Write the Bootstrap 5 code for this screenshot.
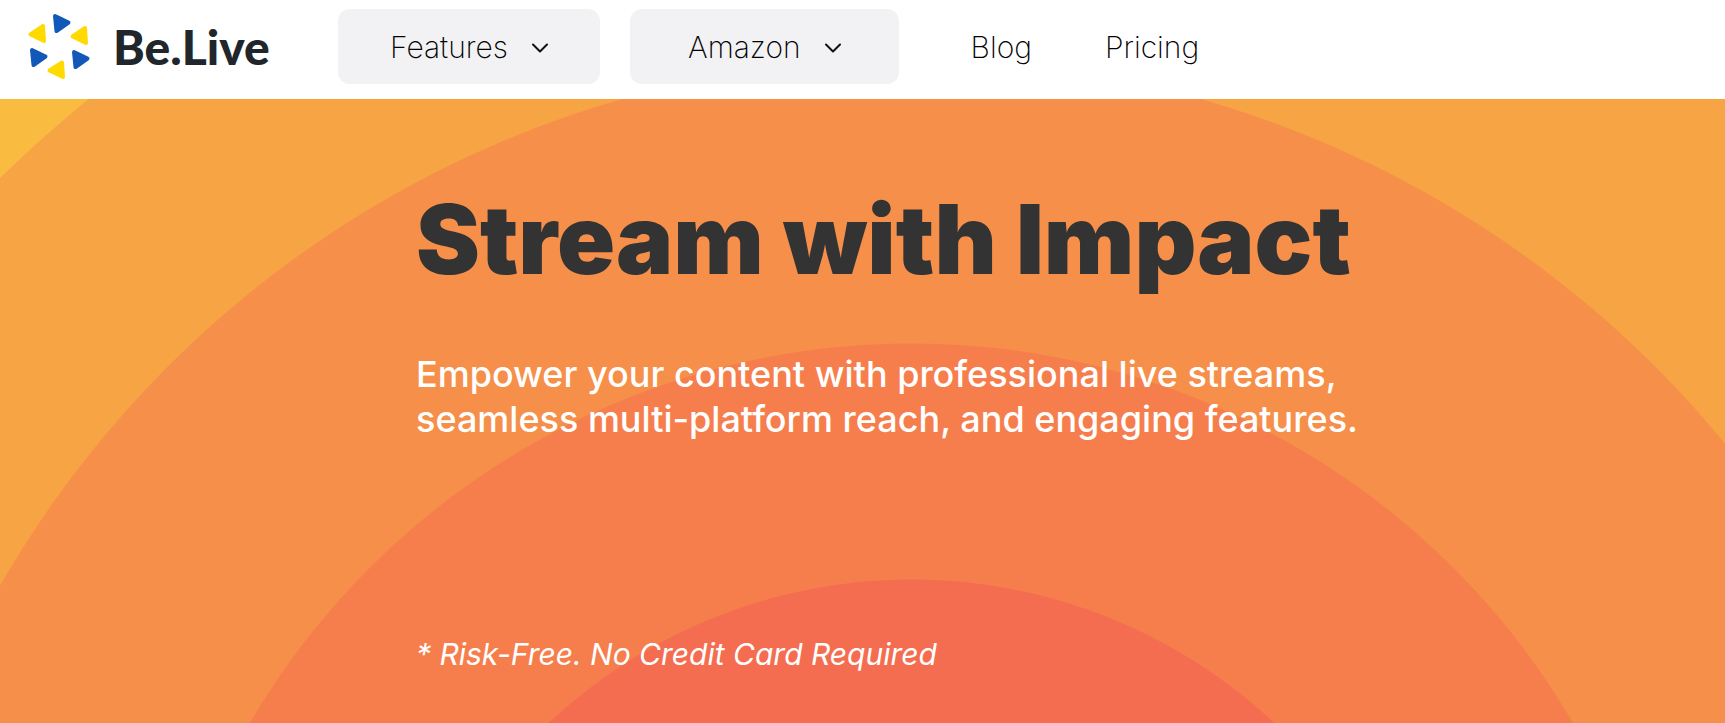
<!DOCTYPE html>
<html lang="en">
<head>
<meta charset="utf-8">
<meta name="viewport" content="width=device-width, initial-scale=1">
<title>Be.Live</title>
<link rel="stylesheet" href="https://cdn.jsdelivr.net/npm/bootstrap@5.3.0/dist/css/bootstrap.min.css">
<style>
  body { font-family: Inter, "Liberation Sans", sans-serif; }
  .site-bar { padding: 9px 28px 15px; }
  .brand-link { gap: 22px; width: 310px; color: #20262b; font: 900 48px/56px Lato, sans-serif; }
  .site-links { gap: 30px; font-size: 30px; font-weight: 200; line-height: 37px; }
  .site-links a { color: #000; }
  .menu-pill { --bs-btn-font-size: 30px; --bs-btn-font-weight: 200; --bs-btn-line-height: 37px;
    --bs-btn-padding-x: 52px; --bs-btn-border-width: 0; --bs-btn-border-radius: 12px;
    --bs-btn-bg: #f2f2f4; --bs-btn-hover-bg: #e8e8eb; --bs-btn-color: #000;
    padding-top: 20px; padding-bottom: 18px; gap: 24px; }
  .menu-pill-wide { --bs-btn-padding-x: 58px; }
  .plain-links { gap: 73px; padding: 2px 0 0 42px; }
  .hero-area { color: #fff; padding: 82px 24px 32px calc(24% + 2px);
    background: radial-gradient(circle at calc(50% + 49px) 1011px,
      #f46d50 530px, #f67e4d 531px, #f67e4d 766px, #f68f49 767px,
      #f68f49 1051px, #f7a445 1052px, #f7a445 1303px, #f9bb40 1304px); }
  .hero-title { color: #333; font-size: 96px; font-weight: 900; line-height: 116px; margin-bottom: 55px; }
  .hero-text { font-size: 36px; font-weight: 500; line-height: 45px; max-width: 960px; margin-bottom: 194px; }
  .hero-note { font-size: 30px; line-height: 36px; }
</style>
</head>
<body class="d-flex flex-column min-vh-100">
<header>
  <nav class="site-bar d-flex flex-wrap align-items-center bg-white">
    <a class="brand-link d-flex align-items-center text-decoration-none" href="#">
      <svg width="63" height="67" viewBox="28 13 63 67" stroke-width="4" stroke-linejoin="round" aria-hidden="true">
        <g fill="#1258b8" stroke="#1258b8">
          <path d="M55 16L68.500 22.500L56.500 31Z"/><path d="M32 50L45.500 56.500L33.500 65Z"/><path d="M74 52L87.500 58.500L75.500 67Z"/>
        </g>
        <g fill="#ffda00" stroke="#ffda00">
          <path d="M43 26L30.500 34.500L44 41Z"/><path d="M85 28L72.500 36.500L86 43Z"/><path d="M62 62.500L49.500 70.500L63 77Z"/>
        </g>
      </svg>
      <span>Be.Live</span>
    </a>
    <div class="site-links d-flex flex-wrap align-items-center">
      <button class="btn menu-pill d-flex align-items-center" type="button">Features
        <svg width="16" height="10" viewBox="0 0 16 10" fill="none" stroke="#111" stroke-width="2" stroke-linecap="round" stroke-linejoin="round" aria-hidden="true"><path d="M1 1.500L8 8.500L15 1.500"/></svg>
      </button>
      <button class="btn menu-pill menu-pill-wide d-flex align-items-center" type="button">Amazon
        <svg width="16" height="10" viewBox="0 0 16 10" fill="none" stroke="#111" stroke-width="2" stroke-linecap="round" stroke-linejoin="round" aria-hidden="true"><path d="M1 1.500L8 8.500L15 1.500"/></svg>
      </button>
      <div class="plain-links d-flex">
        <a class="text-decoration-none" href="#">Blog</a>
        <a class="text-decoration-none" href="#">Pricing</a>
      </div>
    </div>
  </nav>
</header>
<main class="hero-area flex-grow-1">
  <h1 class="hero-title">Stream with Impact</h1>
  <p class="hero-text">Empower your content with professional live streams, seamless multi-platform reach, and engaging features.</p>
  <p class="hero-note fst-italic mb-0">* Risk-Free. No Credit Card Required</p>
</main>
<script src="https://cdn.jsdelivr.net/npm/bootstrap@5.3.0/dist/js/bootstrap.bundle.min.js"></script>
</body>
</html>
